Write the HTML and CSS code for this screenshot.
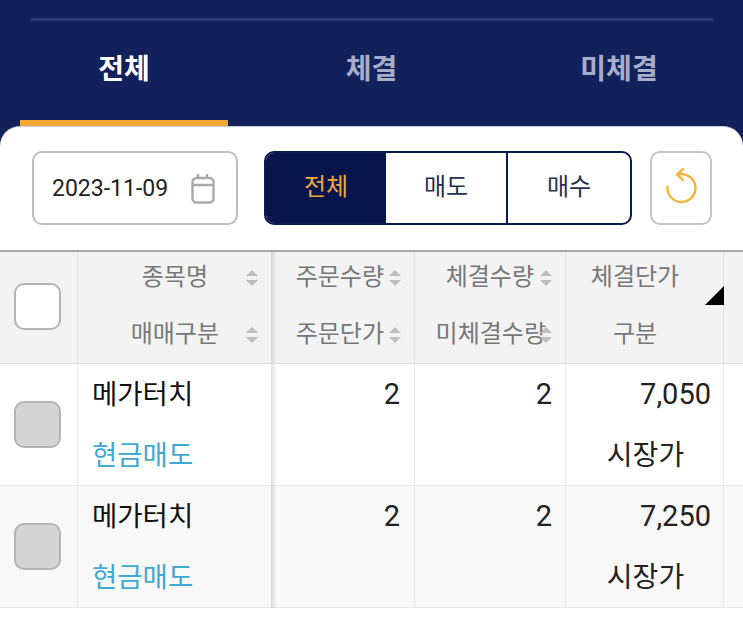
FILE: index.html
```html
<!DOCTYPE html>
<html lang="ko">
<head>
	<meta charset="UTF-8" />
	<title>주문내역</title>
	<link rel="stylesheet" href="styles.css">
</head>
<body>
<div class="top">
	<div class="top_line"></div>
	<div class="tabs">
		<a href="#" class="tab on">전체</a>
		<a href="#" class="tab">체결</a>
		<a href="#" class="tab">미체결</a>
	</div>
</div>
<div class="panel">
	<div class="filter">
		<div class="date">
			<span>2023-11-09</span>
			<svg width="24" height="31" viewBox="0 0 24 31" fill="none" stroke="#a9a9a9" stroke-width="2.4">
				<rect x="1.500" y="5" width="21" height="24.500" rx="4"/>
				<path d="M1.500 12H22.500M7 1V5M16 1V5"/>
			</svg>
		</div>
		<div class="seg">
			<a href="#" class="seg_item on">전체</a>
			<a href="#" class="seg_item">매도</a>
			<a href="#" class="seg_item">매수</a>
		</div>
		<a href="#" class="reload">
			<svg width="32" height="44" viewBox="0 0 32 44" fill="none" stroke="#f2b63f" stroke-width="2.4" stroke-linecap="round" stroke-linejoin="round">
				<path d="M13 7.500A14 14 0 1 1 2.500 20"/>
				<path d="M18 2L12 7.500L18 13"/>
			</svg>
		</a>
	</div>

	<div class="row head">
		<div class="cell check"><i class="box"></i></div>
		<div class="cell name">
			<div class="line"><span class="label">종목명</span><i class="sort"></i></div>
			<div class="line"><span class="label">매매구분</span><i class="sort"></i></div>
		</div>
		<div class="cell num first">
			<div class="line"><span class="label">주문수량</span><i class="sort tight"></i></div>
			<div class="line"><span class="label">주문단가</span><i class="sort tight"></i></div>
		</div>
		<div class="cell num num2">
			<div class="line"><span class="label">체결수량</span><i class="sort tight"></i></div>
			<div class="line"><span class="label">미체결수량</span><i class="sort over"></i></div>
		</div>
		<div class="cell price">
			<div class="line">체결단가</div>
			<div class="line">구분</div>
			<i class="corner"></i>
		</div>
		<div class="cell last"></div>
	</div>

	<div class="row item">
		<div class="cell check"><i class="box off"></i></div>
		<div class="cell name">
			<div class="line">메가터치</div>
			<div class="line sell">현금매도</div>
		</div>
		<div class="cell num first"><div class="line">2</div></div>
		<div class="cell num"><div class="line">2</div></div>
		<div class="cell price">
			<div class="line val">7,050</div>
			<div class="line">시장가</div>
		</div>
		<div class="cell last"></div>
	</div>

	<div class="row item alt">
		<div class="cell check"><i class="box off"></i></div>
		<div class="cell name">
			<div class="line">메가터치</div>
			<div class="line sell">현금매도</div>
		</div>
		<div class="cell num first"><div class="line">2</div></div>
		<div class="cell num"><div class="line">2</div></div>
		<div class="cell price">
			<div class="line val">7,250</div>
			<div class="line">시장가</div>
		</div>
		<div class="cell last"></div>
	</div>
</div>
</body>
</html>
```

FILE: styles.css
```css
html,body{margin:0;padding:0;}
body{width:743px;height:632px;overflow:hidden;background:#fff;font-family:'Roboto','Noto Sans CJK KR',sans-serif;}
a{text-decoration:none;color:inherit;}
i{display:block;font-style:normal;}

.top{height:146px;padding-top:18px;box-sizing:border-box;background:#12205b;}
.top_line{height:3px;margin:0 30px 0 31px;background:#2f3b72;}
.tabs{display:grid;grid-template-columns:248px 247px 248px;height:105px;}
.tab{height:105px;box-sizing:border-box;padding-top:29px;margin:0 20px;text-align:center;color:#a6adc9;font-size:28px;font-weight:700;line-height:40px;white-space:nowrap;}
.tab.on{color:#fff;border-bottom:6px solid #f2a933;}

.panel{height:506px;background:#fff;border-radius:20px 20px 0 0;margin-top:-20px;position:relative;border-top:1px solid #c9cddb;box-sizing:border-box;}
.filter{display:flex;height:123px;padding:24px 0 0 32px;box-sizing:border-box;}
.date{width:206px;height:74px;box-sizing:border-box;border:2px solid #bdbdbd;border-radius:10px;display:flex;align-items:center;justify-content:space-between;padding:0 21px 0 18px;font-size:23px;color:#222;}
.seg{display:grid;grid-template-columns:120px 120px 1fr;width:368px;height:74px;margin-left:26px;box-sizing:border-box;border:2px solid #0b1a4e;border-radius:10px;overflow:hidden;}
.seg_item{text-align:center;font-size:24px;line-height:69px;color:#27304f;}
.seg_item:last-child{border-left:2px solid #0b1a4e;}
.seg_item.on{background:#07154a;color:#f0a83c;}
.reload{width:62px;height:74px;margin-left:18px;box-sizing:border-box;border:2px solid #c4c4c4;border-radius:10px;display:flex;align-items:center;justify-content:center;padding-top:2px;}

.row{display:grid;grid-template-columns:78px 193px 144px 151px 158px 19px;}
.head{height:111px;background:#f3f3f3;border-top:2px solid #a8a8a8;border-bottom:1px solid #dedede;color:#777;font-size:24px;}
.item{height:121px;border-bottom:1px solid #ebebeb;color:#222;font-size:28px;}
.item.alt{background:#f8f8f8;}
.cell{border-right:1px solid #e9e9e9;box-sizing:border-box;position:relative;}
.head .cell{border-right-color:#e2e2e2;}
.cell.last{border-right:0;}
.check{display:flex;align-items:center;justify-content:center;padding:0 3px 2px 0;}
.box{width:47px;height:47px;box-sizing:border-box;border:2px solid #b4b4b4;border-radius:10px;background:#fff;}
.box.off{background:#d4d4d4;}
.name{border-right:0;}
.first{background:linear-gradient(to right,rgba(0,0,0,.13),rgba(0,0,0,0) 6px);}
.line{height:57px;line-height:57px;white-space:nowrap;}
.head .line:first-child{margin-top:-3px;}
.item .line{height:61px;line-height:61px;}

.head .name .line{display:flex;justify-content:flex-end;align-items:center;padding-right:13px;}
.head .name .label{width:140px;text-align:right;margin-right:27px;}
.head .name .line:first-child .label{margin-right:38px;}
.head .num .line{display:flex;justify-content:flex-end;align-items:center;padding-right:13px;}
.sort{width:12px;height:16px;flex:none;position:relative;}
.sort:before,.sort:after{content:"";position:absolute;left:0;border-left:6px solid transparent;border-right:6px solid transparent;}
.sort:before{top:0;border-bottom:6px solid #bdbdbd;}
.sort:after{bottom:0;border-top:6px solid #bdbdbd;}
.sort.tight{margin-left:5px;}
.num2 .sort.tight{margin-left:6px;}
.sort.over{margin-left:-6px;}

.item .name{padding-left:14px;color:#111;font-size:27.500px;}
.item .name .sell{color:#3fa9d3;}
.item .num{text-align:right;padding-right:13px;font-size:29px;}
.item .first{padding-right:14px;}
.price{text-align:center;}
.head .price{padding-right:19px;}
.item .price{padding-left:2px;}
.item .price .val{text-align:right;padding-right:12px;font-size:29px;}
.corner{position:absolute;right:-1px;top:34px;width:0;height:0;border-left:19px solid transparent;border-bottom:19px solid #000;}
```
